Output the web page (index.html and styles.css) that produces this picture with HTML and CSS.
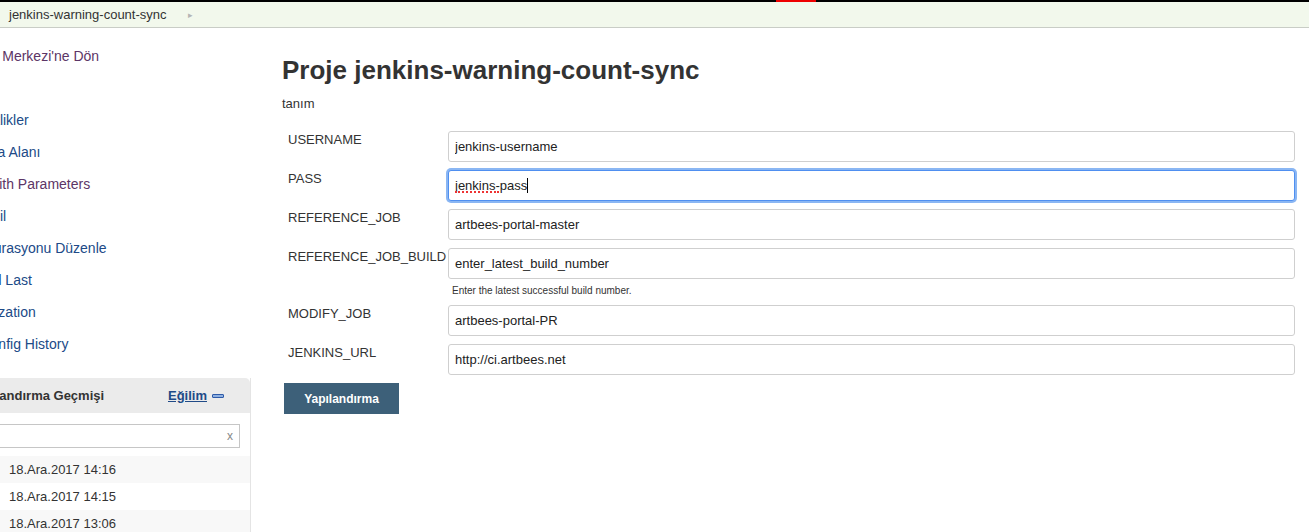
FILE: index.html
```html
<!DOCTYPE html>
<html lang="tr">
<head>
<meta charset="utf-8">
<title>jenkins-warning-count-sync</title>
<link rel="stylesheet" href="styles.css">
</head>
<body>
<div class="topstrip"><span class="topstrip-red"></span></div>
<div class="breadcrumbs">
  <span class="crumb">jenkins-warning-count-sync</span>
  <span class="crumb-arrow">&#9656;</span>
</div>
<div class="page">
  <aside class="side">
    <div class="side-inner">
      <ul class="tasks">
        <li><a class="visited" href="#">Kontrol Merkezi'ne Dön</a></li>
        <li><a href="#">Durum</a></li>
        <li><a href="#">Değişiklikler</a></li>
        <li><a href="#">Çalışma Alanı</a></li>
        <li><a class="visited" href="#">Build with Parameters</a></li>
        <li><a href="#">Proje Sil</a></li>
        <li><a href="#">Konfigürasyonu Düzenle</a></li>
        <li><a href="#">Rebuild Last</a></li>
        <li><a href="#">Authorization</a></li>
        <li><a href="#">Job Config History</a></li>
      </ul>
      <div class="pane">
        <div class="pane-header">
          <span class="pane-title">Yapılandırma Geçmişi</span>
          <span class="pane-tools"><a href="#" class="trend">Eğilim</a><span class="collapse"></span></span>
        </div>
        <div class="pane-filter">
          <div class="filter-box"><span class="filter-x">x</span></div>
        </div>
        <div class="build-row odd"><span class="build-no">#3</span><span class="build-date">18.Ara.2017 14:16</span></div>
        <div class="build-row"><span class="build-no">#2</span><span class="build-date">18.Ara.2017 14:15</span></div>
        <div class="build-row odd"><span class="build-no">#1</span><span class="build-date">18.Ara.2017 13:06</span></div>
      </div>
    </div>
  </aside>
  <main class="main">
    <h1 class="title">Proje jenkins-warning-count-sync</h1>
    <p class="desc">tanım</p>
    <form class="params">
      <div class="row">
        <label class="label">USERNAME</label>
        <div class="field"><input class="input" type="text" value="jenkins-username"></div>
      </div>
      <div class="row">
        <label class="label">PASS</label>
        <div class="field focus-wrap">
          <input class="input focused" type="text" value="jenkins-pass">
          <span class="spell"></span><span class="caret"></span>
        </div>
      </div>
      <div class="row">
        <label class="label">REFERENCE_JOB</label>
        <div class="field"><input class="input" type="text" value="artbees-portal-master"></div>
      </div>
      <div class="row row-help">
        <label class="label">REFERENCE_JOB_BUILD</label>
        <div class="field">
          <input class="input" type="text" value="enter_latest_build_number">
          <div class="help">Enter the latest successful build number.</div>
        </div>
      </div>
      <div class="row">
        <label class="label">MODIFY_JOB</label>
        <div class="field"><input class="input" type="text" value="artbees-portal-PR"></div>
      </div>
      <div class="row">
        <label class="label">JENKINS_URL</label>
        <div class="field"><input class="input" type="text" value="http://ci.artbees.net"></div>
      </div>
      <button class="submit" type="button">Yapılandırma</button>
    </form>
  </main>
</div>
</body>
</html>
```
FILE: styles.css
```css
* { box-sizing: border-box; }
html, body { margin: 0; padding: 0; background: #fff; }
body {
  font-family: "Liberation Sans", Arial, sans-serif;
  font-size: 13px;
  color: #333;
  overflow: hidden;
}
a { text-decoration: none; }

.topstrip { height: 2px; background: #000; display: flex; }
.topstrip-red { display: block; width: 40px; height: 2px; margin-left: 776px; background: #e00; }

.breadcrumbs {
  height: 26px;
  background: #f2f8ec;
  border-bottom: 1px solid #c9cdc6;
  display: flex;
  align-items: center;
  padding-left: 9px;
}
.crumb { font-size: 13px; color: #333; }
.crumb-arrow { color: #b5b5b5; font-size: 9px; margin-left: 21px; }

.page { display: flex; align-items: flex-start; }

.side { width: 251px; flex: 0 0 251px; overflow: hidden; }
.side-inner { width: 311px; margin-left: -60px; }

.tasks { list-style: none; margin: 12px 0 0; padding: 0; }
.tasks li { height: 32px; line-height: 32px; padding-left: 14px; white-space: nowrap; }
.tasks a { color: #204a87; font-size: 14px; }
.tasks a.visited { color: #5c3566; }

.pane { margin-top: 18px; border-right: 1px solid #e4e4e4; }
.pane-header {
  height: 35px;
  background: #ebebeb;
  border-top-right-radius: 5px;
  display: flex;
  align-items: center;
  justify-content: space-between;
  padding: 0 26px 0 29px;
}
.pane-title { font-weight: bold; font-size: 13px; color: #333; }
.pane-tools { display: flex; align-items: center; }
.trend { font-weight: bold; color: #204a87; text-decoration: underline; font-size: 13px; }
.collapse {
  display: block;
  width: 12px; height: 4px;
  margin-left: 5px;
  background: #8fb0e0;
  border: 1px solid #2e5aa8;
  border-radius: 1px;
}
.pane-filter { padding: 11px 10px 8px 10px; background: #fff; }
.filter-box {
  height: 24px;
  border: 1px solid #c6c6c6;
  background: #fff;
  display: flex;
  align-items: center;
  justify-content: flex-end;
  padding-right: 6px;
}
.filter-x { color: #888; font-size: 12px; }
.build-row {
  height: 27px;
  display: flex;
  align-items: center;
  padding-left: 35px;
  background: #fff;
}
.build-row.odd { background: #f8f8f8; }
.build-no { width: 34px; color: #204a87; font-weight: bold; }
.build-date { color: #333; font-size: 13px; }

.main { flex: 1; padding: 0 14px 0 31px; }
.title {
  margin: 27px 0 0;
  font-size: 26px;
  line-height: 30px;
  font-weight: bold;
  color: #333;
}
.desc { margin: 11px 0 0; font-size: 13px; line-height: 15px; }

.params { margin-top: 20px; }
.row { display: flex; align-items: flex-start; margin-bottom: 8px; }
.label {
  flex: 0 0 166px;
  padding: 1px 0 0 6px;
  font-size: 13px;
  line-height: 15px;
  color: #333;
  white-space: nowrap;
}
.field { flex: 1; position: relative; }
.input {
  display: block;
  width: 100%;
  height: 31px;
  border: 1px solid #cfcfcf;
  border-radius: 3px;
  padding: 0 6px;
  font-family: "Liberation Sans", Arial, sans-serif;
  font-size: 13px;
  color: #222;
  background: #fff;
  outline: none;
}
.input.focused {
  border-color: #4f8ff0;
  box-shadow: 0 0 0 2px #8ab6f3;
}
.spell {
  position: absolute;
  left: 7px; top: 21px;
  width: 44px; height: 2px;
  border-bottom: 2px dotted #e33;
}
.caret {
  position: absolute;
  left: 79px; top: 8px;
  width: 1px; height: 15px;
  background: #000;
}
.row-help { margin-bottom: 8px; }
.help { margin-top: 6px; padding-left: 4px; font-size: 10px; line-height: 12px; color: #333; }

.submit {
  display: block;
  margin-left: 2px;
  width: 115px;
  height: 31px;
  border: none;
  background: #3d6079;
  color: #fff;
  font-family: "Liberation Sans", Arial, sans-serif;
  font-weight: bold;
  font-size: 12px;
  padding: 0;
}
```
